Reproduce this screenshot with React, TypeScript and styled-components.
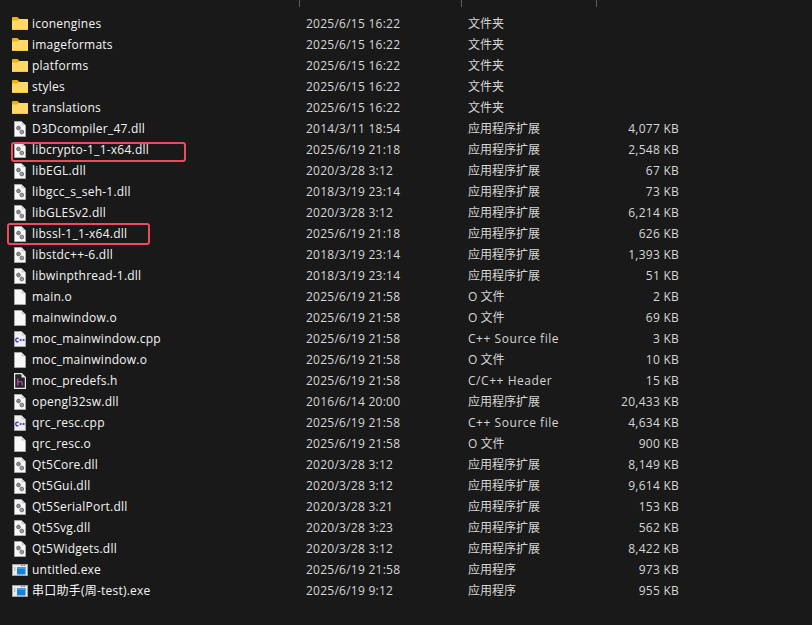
import React from "react";
import styled, { createGlobalStyle } from "styled-components";

const GlobalStyle = createGlobalStyle`
  html, body {
    margin: 0;
    padding: 0;
    background: #191919;
  }
`;

const Page = styled.div`
  width: 812px;
  height: 625px;
  overflow: hidden;
  background: #191919;
  color: #f4f4f4;
  font-family: "Open Sans", "Noto Sans CJK SC", sans-serif;
  font-size: 12px;
  line-height: 21px;
`;

const Header = styled.div`
  display: grid;
  grid-template-columns: 300px 162px 135px;
  height: 7px;
  margin-bottom: 6px;
`;

const HeaderCell = styled.div`
  border-right: 1px solid #5f5f5f;
`;

const Row = styled.div`
  position: relative;
  display: grid;
  grid-template-columns: 306px 162px 80px 131px;
  height: 21px;
`;

const NameCell = styled.div`
  display: flex;
  align-items: center;
  gap: 4px;
  padding-left: 12px;
  white-space: nowrap;
  letter-spacing: 0.23px;
`;

const IconBox = styled.span`
  display: flex;
  width: 16px;
  height: 16px;
  flex: none;
`;

const DateCell = styled.div`
  color: #d6d6d6;
  white-space: nowrap;
  letter-spacing: 0.25px;
`;

const TypeCell = styled.div<{ $latin: boolean }>`
  color: #d6d6d6;
  white-space: nowrap;
  letter-spacing: ${(p) => (p.$latin ? "0.55px" : "0")};
`;

const Size = styled.div`
  color: #d6d6d6;
  white-space: nowrap;
  text-align: right;
  letter-spacing: 0.25px;
`;

const Highlight = styled.div<{ $left: number; $top: number; $width: number; $height: number }>`
  position: absolute;
  left: ${(p) => p.$left}px;
  top: ${(p) => p.$top}px;
  width: ${(p) => p.$width}px;
  height: ${(p) => p.$height}px;
  box-sizing: border-box;
  border: 2px solid #f0485f;
  border-radius: 3px;
`;

const FolderIcon = () => (
  <svg width="16" height="16" viewBox="0 0 16 16">
    <path d="M0 1.8C0 1.3.4 1 1 1h4.4l2 2H15c.6 0 1 .4 1 1v1H0z" fill="#f0b00e" />
    <path d="M0 4.4h5.2L7 3h8c.6 0 1 .4 1 1v9c0 .6-.4 1-1 1H1c-.6 0-1-.4-1-1z" fill="#ffd867" />
    <path d="M0 13h16c0 .6-.4 1-1 1H1c-.6 0-1-.4-1-1z" fill="#f5c64e" />
  </svg>
);

const Sheet = ({ fill = "#f8f8f8" }: { fill?: string }) => (
  <>
    <path d="M2.5.5h7l4 4v11h-11z" fill={fill} stroke="#a8a8a8" strokeWidth="1" />
    <path d="M9.5.5v4h4z" fill="#cfcfcf" />
  </>
);

const DllIcon = () => (
  <svg width="16" height="16" viewBox="0 0 16 16">
    <Sheet />
    <circle cx="6.5" cy="7" r="1.9" fill="#8a8f96" stroke="#5e6369" strokeWidth=".8" />
    <circle cx="9.8" cy="11" r="1.9" fill="#9ba0a6" stroke="#5e6369" strokeWidth=".8" />
  </svg>
);

const BlankIcon = () => (
  <svg width="16" height="16" viewBox="0 0 16 16">
    <Sheet />
  </svg>
);

const CppIcon = () => (
  <svg width="16" height="16" viewBox="0 0 16 16">
    <Sheet fill="#f1eff6" />
    <path d="M6.6 7.4a1.9 1.9 0 1 0 0 3.2" fill="none" stroke="#3533b5" strokeWidth="1.2" />
    <path d="M7.5 9h2.4M8.7 7.9v2.2M10.4 9h2.4M11.6 7.9v2.2" stroke="#3533b5" strokeWidth=".9" />
  </svg>
);

const HeaderIcon = () => (
  <svg width="16" height="16" viewBox="0 0 16 16">
    <path d="M2.6.6h7l3.8 3.8v11H2.6z" fill="#262626" stroke="#e8e8e8" strokeWidth="1.2" />
    <path d="M9.5.5v4h4z" fill="#e8e8e8" />
    <path d="M5.7 5.5v7M5.7 8.6h3.4c.6 0 1 .4 1 1v2.9" fill="none" stroke="#b0439f" strokeWidth="1.4" />
  </svg>
);

const ExeIcon = () => (
  <svg width="16" height="16" viewBox="0 0 16 16">
    <rect x="0" y="2" width="16" height="12" fill="#ececec" />
    <rect x="0.5" y="2.5" width="15" height="11" fill="none" stroke="#a2a2a2" strokeWidth="1" />
    <rect x="9" y="3" width="1.5" height="1" fill="#777" />
    <rect x="11.5" y="3" width="1.5" height="1" fill="#777" />
    <rect x="5" y="5" width="8.5" height="7.5" fill="#157fdc" />
    <rect x="5" y="5" width="8.5" height="2" fill="#3d9dea" />
    <rect x="2" y="5.5" width="1.5" height="1" fill="#9a9a9a" />
    <rect x="2" y="7.5" width="1.5" height="1" fill="#9a9a9a" />
  </svg>
);

const icons = {
  folder: FolderIcon,
  dll: DllIcon,
  blank: BlankIcon,
  cpp: CppIcon,
  h: HeaderIcon,
  exe: ExeIcon,
};

type FileRow = {
  name: string;
  date: string;
  type: string;
  size?: string;
  icon: keyof typeof icons;
  box?: { left: number; top: number; width: number; height: number };
};

const files: FileRow[] = [
  { name: "iconengines", date: "2025/6/15 16:22", type: "文件夹", icon: "folder" },
  { name: "imageformats", date: "2025/6/15 16:22", type: "文件夹", icon: "folder" },
  { name: "platforms", date: "2025/6/15 16:22", type: "文件夹", icon: "folder" },
  { name: "styles", date: "2025/6/15 16:22", type: "文件夹", icon: "folder" },
  { name: "translations", date: "2025/6/15 16:22", type: "文件夹", icon: "folder" },
  { name: "D3Dcompiler_47.dll", date: "2014/3/11 18:54", type: "应用程序扩展", size: "4,077 KB", icon: "dll" },
  {
    name: "libcrypto-1_1-x64.dll",
    date: "2025/6/19 21:18",
    type: "应用程序扩展",
    size: "2,548 KB",
    icon: "dll",
    box: { left: 11, top: 3, width: 175, height: 20 },
  },
  { name: "libEGL.dll", date: "2020/3/28 3:12", type: "应用程序扩展", size: "67 KB", icon: "dll" },
  { name: "libgcc_s_seh-1.dll", date: "2018/3/19 23:14", type: "应用程序扩展", size: "73 KB", icon: "dll" },
  { name: "libGLESv2.dll", date: "2020/3/28 3:12", type: "应用程序扩展", size: "6,214 KB", icon: "dll" },
  {
    name: "libssl-1_1-x64.dll",
    date: "2025/6/19 21:18",
    type: "应用程序扩展",
    size: "626 KB",
    icon: "dll",
    box: { left: 7, top: 0, width: 143, height: 22 },
  },
  { name: "libstdc++-6.dll", date: "2018/3/19 23:14", type: "应用程序扩展", size: "1,393 KB", icon: "dll" },
  { name: "libwinpthread-1.dll", date: "2018/3/19 23:14", type: "应用程序扩展", size: "51 KB", icon: "dll" },
  { name: "main.o", date: "2025/6/19 21:58", type: "O 文件", size: "2 KB", icon: "blank" },
  { name: "mainwindow.o", date: "2025/6/19 21:58", type: "O 文件", size: "69 KB", icon: "blank" },
  { name: "moc_mainwindow.cpp", date: "2025/6/19 21:58", type: "C++ Source file", size: "3 KB", icon: "cpp" },
  { name: "moc_mainwindow.o", date: "2025/6/19 21:58", type: "O 文件", size: "10 KB", icon: "blank" },
  { name: "moc_predefs.h", date: "2025/6/19 21:58", type: "C/C++ Header", size: "15 KB", icon: "h" },
  { name: "opengl32sw.dll", date: "2016/6/14 20:00", type: "应用程序扩展", size: "20,433 KB", icon: "dll" },
  { name: "qrc_resc.cpp", date: "2025/6/19 21:58", type: "C++ Source file", size: "4,634 KB", icon: "cpp" },
  { name: "qrc_resc.o", date: "2025/6/19 21:58", type: "O 文件", size: "900 KB", icon: "blank" },
  { name: "Qt5Core.dll", date: "2020/3/28 3:12", type: "应用程序扩展", size: "8,149 KB", icon: "dll" },
  { name: "Qt5Gui.dll", date: "2020/3/28 3:12", type: "应用程序扩展", size: "9,614 KB", icon: "dll" },
  { name: "Qt5SerialPort.dll", date: "2020/3/28 3:21", type: "应用程序扩展", size: "153 KB", icon: "dll" },
  { name: "Qt5Svg.dll", date: "2020/3/28 3:23", type: "应用程序扩展", size: "562 KB", icon: "dll" },
  { name: "Qt5Widgets.dll", date: "2020/3/28 3:12", type: "应用程序扩展", size: "8,422 KB", icon: "dll" },
  { name: "untitled.exe", date: "2025/6/19 21:58", type: "应用程序", size: "973 KB", icon: "exe" },
  { name: "串口助手(周-test).exe", date: "2025/6/19 9:12", type: "应用程序", size: "955 KB", icon: "exe" },
];

export default function App() {
  return (
    <Page>
      <GlobalStyle />
      <Header>
        <HeaderCell />
        <HeaderCell />
        <HeaderCell />
      </Header>
      {files.map((f) => {
        const Icon = icons[f.icon];
        return (
          <Row key={f.name}>
            <NameCell>
              <IconBox>
                <Icon />
              </IconBox>
              {f.name}
            </NameCell>
            <DateCell>{f.date}</DateCell>
            <TypeCell $latin={f.type.startsWith("C")}>{f.type}</TypeCell>
            <Size>{f.size}</Size>
            {f.box && <Highlight $left={f.box.left} $top={f.box.top} $width={f.box.width} $height={f.box.height} />}
          </Row>
        );
      })}
    </Page>
  );
}
